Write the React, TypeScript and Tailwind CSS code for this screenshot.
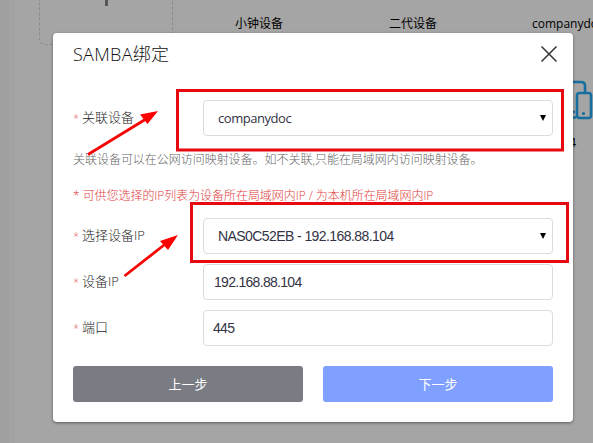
import type { ReactNode } from 'react';

const ui = "font-['Open_Sans','Noto_Sans_CJK_SC',sans-serif]";
const field =
  "flex h-9 w-[350px] items-center rounded border border-[#dcdcdc] bg-white font-['Liberation_Sans','Noto_Sans_CJK_SC',sans-serif] text-sm text-[#333344]";

function Row({ label, children }: { label: string; children: ReactNode }) {
  return (
    <div className="flex h-9 items-center justify-between">
      <label className="flex h-9 w-[130px] text-[13px] leading-[35px] font-light text-[#222]">
        <span className="w-[9px] text-[11px] text-[#e06060]">*</span>
        <span>{label}</span>
      </label>
      {children}
    </div>
  );
}

function Select({ value, className }: { value: string; className: string }) {
  return (
    <button className={`${field} justify-between pr-[6px] pl-[14px]`}>
      <span className={className}>{value}</span>
      <svg className="h-[6px] w-[6px]" viewBox="0 0 6 6">
        <path d="M0 0h6L3 6z" fill="#000" />
      </svg>
    </button>
  );
}

function Backdrop() {
  return (
    <div className="flex h-full bg-[#a5a5a5] text-xs text-black">
      <div className="w-[9px] shrink-0 bg-[#9f9f9f]" />
      <div className="w-[6px] shrink-0 bg-[#a3a3a3]" />
      <div className="ml-[24px] flex h-[45px] w-[134px] shrink-0 justify-center rounded-b-[6px] border border-t-0 border-dashed border-[#8b8b8b]">
        <div className="h-[6px] w-[3px] bg-[#555]" />
      </div>
      <div className="mt-[15px] ml-[62px] w-12 shrink-0 leading-[18px]">小钟设备</div>
      <div className="mt-[15px] ml-[106px] w-12 shrink-0 leading-[18px]">二代设备</div>
      <div className="mt-[15px] ml-[95px] w-[80px] shrink-0">
        <div className="leading-[18px]">companydoc</div>
        <svg className="mt-[44px] h-[46px] w-[64px]" viewBox="532 77 64 46" fill="none" stroke="#176fa0" strokeWidth="2.6">
          <path d="M550 82h31q4 0 4 4v7M550 82v30h25M555 117.5h21" />
          <rect x="577" y="93" width="14" height="25" rx="2.5" />
          <circle cx="583.5" cy="113.5" r="1.6" fill="#176fa0" stroke="none" />
        </svg>
        <div className="mt-[11px] w-[44px] text-right leading-[18px]">4</div>
      </div>
    </div>
  );
}

function Annotations() {
  return (
    <svg className="pointer-events-none absolute inset-0 h-full w-full" viewBox="0 0 593 443" fill="none">
      <g stroke="#e60a10" strokeWidth="3">
        <rect x="177.5" y="90.5" width="385" height="59.500" />
        <rect x="191.5" y="203.5" width="376" height="58" />
      </g>
      <g stroke="#f50505" strokeWidth="2.8">
        <path d="M88 154.500L146 119M124.500 276L166 243.500" />
      </g>
      <path d="M158 111L147.500 124L140 114.500ZM178 235L168 250L160 241Z" fill="#ff0000" />
    </svg>
  );
}

export default function App() {
  return (
    <main className={`relative h-[443px] w-[593px] overflow-hidden ${ui}`}>
      <Backdrop />
      <section className="absolute top-[33px] left-[53px] flex h-[389px] w-[520px] flex-col rounded bg-white px-5 shadow-[0_1px_3px_rgba(0,0,0,0.45)]">
        <header className="flex h-[67px] shrink-0 justify-between">
          <h1 className="mt-[8px] text-[18px] leading-[26px] font-light tracking-[0.3px] text-[#111]">SAMBA绑定</h1>
          <button aria-label="close" className="mt-[13px] -mr-1 h-4 w-4">
            <svg viewBox="0 0 16 16" stroke="#333" strokeWidth="1.5">
              <path d="M.5.5l15 15M15.500.5L.5 15.500" />
            </svg>
          </button>
        </header>
        <Row label="关联设备">
          <Select value="companydoc" className="font-['Open_Sans',sans-serif] text-[13px] tracking-[-0.45px]" />
        </Row>
        <p className="mt-[15px] h-[18px] text-xs leading-[18px] font-light tracking-[-0.03px] whitespace-nowrap text-[#666]">
          关联设备可以在公网访问映射设备。如不关联,只能在局域网内访问映射设备。
        </p>
        <p className="mt-[18px] h-[18px] text-xs leading-[18px] font-light tracking-[-0.05px] whitespace-nowrap text-[#e03a3a]">
          * 可供您选择的IP列表为设备所在局域网内IP / 为本机所在局域网内IP
        </p>
        <div className="mt-[13px] flex flex-col gap-[10px]">
          <Row label="选择设备IP">
            <Select value="NAS0C52EB - 192.168.88.104" className="tracking-[-0.58px]" />
          </Row>
          <Row label="设备IP">
            <div className={`${field} pl-[10px] tracking-[-0.7px]`}>192.168.88.104</div>
          </Row>
          <Row label="端口">
            <div className={`${field} pl-[9px] tracking-[-0.7px]`}>445</div>
          </Row>
        </div>
        <footer className="mt-5 grid grid-cols-2 gap-5 text-[13px] text-white">
          <button className="h-9 rounded-[3px] bg-[#797c83] pt-[2px]">上一步</button>
          <button className="h-9 rounded-[3px] bg-[#7fa0ff] pt-[2px]">下一步</button>
        </footer>
      </section>
      <Annotations />
    </main>
  );
}
